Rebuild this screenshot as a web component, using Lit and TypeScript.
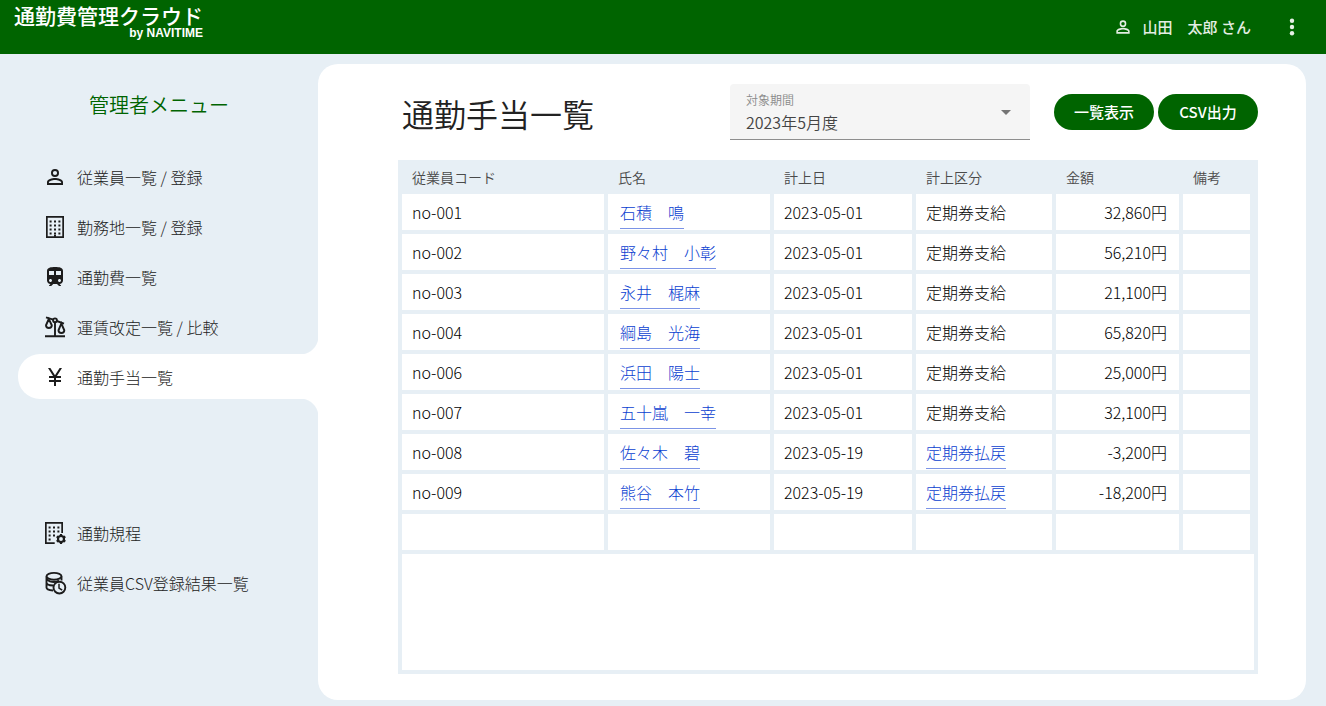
import { LitElement, html, svg, css, nothing } from "lit";
import { customElement, property } from "lit/decorators.js";
import { classMap } from "lit/directives/class-map.js";

const dots = (xs: number[], ys: number[], size: number) =>
  ys.flatMap((y) => xs.map((x) => svg`<rect x=${x} y=${y} width=${size} height=${size} />`));

const icons: Record<string, unknown> = {
  person: svg`<path d="M12 4a4 4 0 1 0 0 8 4 4 0 0 0 0-8zm0 1.9a2.1 2.1 0 1 1 0 4.2 2.1 2.1 0 0 1 0-4.2zM12 13c-2.67 0-8 1.34-8 4v3h16v-3c0-2.66-5.33-4-8-4zm6.1 5.1H5.9V17c0-.64 3.13-2.1 6.1-2.1s6.1 1.46 6.1 2.1z"/>`,
  building: svg`<path fill-rule="evenodd" d="M3 1h18v22H3zM4.7 2.7v18.6h14.600V2.700z"/>${dots([6.6, 11, 15.400], [5.500, 9.500, 13.500, 17.500], 2)}<rect x="11" y="19.800" width="2" height="2"/>`,
  train: svg`<path d="M12 2c-4 0-8 .5-8 4v9.500C4 17.430 5.570 19 7.500 19L6 20.500v.5h2.230l2-2H14l2 2h2v-.5L16.500 19c1.930 0 3.500-1.570 3.500-3.500V6c0-3.500-3.580-4-8-4zM7.500 17c-.83 0-1.500-.67-1.500-1.500S6.670 14 7.500 14s1.500.67 1.500 1.500S8.330 17 7.500 17zm3.500-7H6V6h5v4zm2 0V6h5v4h-5zm3.500 7c-.83 0-1.500-.67-1.500-1.500s.67-1.500 1.500-1.500 1.500.67 1.500 1.500-.67 1.500-1.500 1.500z"/>`,
  scale: svg`<g fill="none" stroke="currentColor" stroke-width="1.900"><path d="M2 21.300h20M12 7.500v13.500M3 2.300l7.200 2.300M13.800 6l7.200 2.600"/><circle cx="12" cy="5.300" r="1.900"/><path d="M5.800 4L3 10.300a2.900 2.700 0 0 0 5.800 0zM18.300 8.500L15.500 15.300a2.900 2.700 0 0 0 5.800 0z"/></g>`,
  yen: svg`<path d="M13.920 11H18v2h-5v2h5v2h-5v4h-2v-4H6v-2h5v-2H6v-2h4.080L5 3h2.370L12 10.290 16.630 3H19z"/>`,
  buildingGear: svg`<path d="M2 1h18v11h-1.700V2.700H3.700v18.600h8V23H2z"/>${dots([5.6, 10, 14.400], [5.500, 9.500], 2)}${dots([5.6, 10], [13.500], 2)}${dots([5.6], [17.500], 2)}<circle cx="18" cy="18" r="3" fill="none" stroke="currentColor" stroke-width="2.200"/><path fill="none" stroke="currentColor" stroke-width="2.200" d="M18 13v2M18 21v2M13.700 15.500l1.700 1M20.600 19.500l1.700 1M13.700 20.500l1.700-1M20.600 16.500l1.700-1"/>`,
  databaseClock: svg`<g fill="none" stroke="currentColor" stroke-width="1.900"><ellipse cx="11" cy="5.300" rx="7.500" ry="3.400"/><path d="M3.500 5.500v11c0 1.500 2.500 2.700 6.500 3M3.500 11.500c0 1.600 2.600 2.900 6.500 3M18.500 5.500v4M3.500 7c1.500 4.500 9 4.800 12.500 2.500"/><circle cx="16.400" cy="16.600" r="5.900"/><path stroke-width="1.500" d="M16 12.800v4.200l3.200 2.200"/></g>`,
  more: svg`<circle cx="12" cy="5.800" r="2.200"/><circle cx="12" cy="12" r="2.200"/><circle cx="12" cy="18.200" r="2.200"/>`,
};

@customElement("ui-icon")
class UiIcon extends LitElement {
  static styles = css`
    :host { display: inline-flex; flex: none; width: 24px; height: 24px; }
    .icon { width: 100%; height: 100%; fill: currentColor; }
  `;
  @property() name = "";
  render() {
    return html`<svg class="icon" viewBox="0 0 24 24" aria-hidden="true">${icons[this.name]}</svg>`;
  }
}

const mainMenu = [
  { icon: "person", label: "従業員一覧 / 登録" },
  { icon: "building", label: "勤務地一覧 / 登録" },
  { icon: "train", label: "通勤費一覧" },
  { icon: "scale", label: "運賃改定一覧 / 比較" },
  { icon: "yen", label: "通勤手当一覧", active: true },
];
const subMenu = [
  { icon: "buildingGear", label: "通勤規程" },
  { icon: "databaseClock", label: "従業員CSV登録結果一覧" },
];

@customElement("side-menu")
class SideMenu extends LitElement {
  static styles = css`
    :host { display: block; }
    .title { margin: 0; padding: 37px 0 35px; font-size: 20px; line-height: 28px; font-weight: 350; text-align: center; color: #006400; }
    .list { list-style: none; margin: 0; padding: 0 0 0 18px; display: grid; gap: 5px; }
    .list + .list { margin-top: 111px; }
    .link { position: relative; display: flex; align-items: center; gap: 10px; height: 45px; padding-left: 25px; border-radius: 22px 0 0 22px; color: #1c1c1c; text-decoration: none; font-size: 16px; line-height: 24px; font-weight: 300; }
    .label { color: #222; }
    .active { background: #fff; }
    .active::before, .active::after { content: ""; position: absolute; right: 0; width: 18px; height: 18px; }
    .active::before { bottom: 100%; background: radial-gradient(circle at 0 0, #e7eff5 18px, #fff 19px); }
    .active::after { top: 100%; background: radial-gradient(circle at 0 100%, #e7eff5 18px, #fff 19px); }
  `;
  private list(items: { icon: string; label: string; active?: boolean }[]) {
    return html`<ul class="list">
      ${items.map((item) => html`<li>
        <a class=${classMap({ link: true, active: !!item.active })} href="#" aria-current=${item.active ? "page" : nothing}>
          <ui-icon name=${item.icon}></ui-icon><span class="label">${item.label}</span>
        </a>
      </li>`)}
    </ul>`;
  }
  render() {
    return html`<nav><h2 class="title">管理者メニュー</h2>${this.list(mainMenu)}${this.list(subMenu)}</nav>`;
  }
}

interface Allowance { code: string; name: string; date: string; kind: string; amount: string; }

const rows: Allowance[] = [
  { code: "no-001", name: "石積　鳴", date: "2023-05-01", kind: "定期券支給", amount: "32,860円" },
  { code: "no-002", name: "野々村　小彰", date: "2023-05-01", kind: "定期券支給", amount: "56,210円" },
  { code: "no-003", name: "永井　梶麻", date: "2023-05-01", kind: "定期券支給", amount: "21,100円" },
  { code: "no-004", name: "綱島　光海", date: "2023-05-01", kind: "定期券支給", amount: "65,820円" },
  { code: "no-006", name: "浜田　陽士", date: "2023-05-01", kind: "定期券支給", amount: "25,000円" },
  { code: "no-007", name: "五十嵐　一幸", date: "2023-05-01", kind: "定期券支給", amount: "32,100円" },
  { code: "no-008", name: "佐々木　碧", date: "2023-05-19", kind: "定期券払戻", amount: "-3,200円" },
  { code: "no-009", name: "熊谷　本竹", date: "2023-05-19", kind: "定期券払戻", amount: "-18,200円" },
];

@customElement("allowance-table")
class AllowanceTable extends LitElement {
  static styles = css`
    :host { display: flex; flex-direction: column; padding: 0 4px 4px; background: #e7eff5; }
    .table { width: 100%; table-layout: fixed; border-collapse: separate; border-spacing: 0; }
    .col-code { width: 206px; }
    .col-name { width: 166px; }
    .col-date { width: 142px; }
    .col-kind { width: 140px; }
    .col-amount { width: 127px; }
    .col-note { width: 71px; }
    .head { height: 34px; padding: 0 10px; text-align: left; font-size: 14px; line-height: 20px; font-weight: 350; color: #4a4a4a; }
    .cell { height: 36px; padding: 0 10px; border: solid #e7eff5; border-width: 0 4px 4px 0; background: #fff; background-clip: padding-box; font-size: 16px; line-height: 24px; font-weight: 300; color: #000; }
    .name { padding-left: 12px; }
    .amount { padding-right: 12px; text-align: right; }
    .link { display: inline-block; height: 30px; box-sizing: border-box; line-height: 24px; padding-top: 1px; margin-top: 3px; vertical-align: top; border-bottom: 1px solid #7b93e6; color: #0a40d0; text-decoration: none; }
    .rest { flex: 1; background: #fff; }
  `;
  render() {
    return html`
      <table class="table">
        <colgroup><col class="col-code"><col class="col-name"><col class="col-date"><col class="col-kind"><col class="col-amount"><col class="col-note"></colgroup>
        <thead><tr>
          <th class="head" scope="col">従業員コード</th>
          <th class="head" scope="col">氏名</th>
          <th class="head" scope="col">計上日</th>
          <th class="head" scope="col">計上区分</th>
          <th class="head" scope="col">金額</th>
          <th class="head" scope="col">備考</th>
        </tr></thead>
        <tbody>
          ${rows.map((r) => html`<tr>
            <td class="cell">${r.code}</td>
            <td class="cell name"><a class="link" href="#">${r.name}</a></td>
            <td class="cell">${r.date}</td>
            <td class="cell">${r.kind === "定期券払戻" ? html`<a class="link" href="#">${r.kind}</a>` : r.kind}</td>
            <td class="cell amount">${r.amount}</td>
            <td class="cell"></td>
          </tr>`)}
          <tr>${[0, 1, 2, 3, 4, 5].map(() => html`<td class="cell"></td>`)}</tr>
        </tbody>
      </table>
      <div class="rest"></div>
    `;
  }
}

@customElement("app-root")
class AppRoot extends LitElement {
  static styles = css`
    :host { display: flex; flex-direction: column; min-height: 100vh; background: #e7eff5; color: #222; font-family: "Noto Sans CJK JP", "Noto Sans", sans-serif; font-weight: 350; }
    .header { display: flex; align-items: center; justify-content: space-between; box-sizing: border-box; height: 54px; padding: 0 22px 0 14px; background: #006400; color: #fff; }
    .logo { align-self: flex-start; display: grid; justify-items: end; padding-top: 5px; color: #fff; text-decoration: none; }
    .logo-name { font-size: 21px; line-height: 21px; font-weight: 500; }
    .logo-by { font: bold 12px/14px "Liberation Sans", Arial, sans-serif; }
    .account { display: flex; align-items: center; gap: 29px; }
    .user { display: flex; align-items: center; gap: 10px; border: 0; padding: 0; background: none; color: #e3eee3; font: 500 15px/24px "Noto Sans CJK JP", sans-serif; }
    .user-icon { width: 20px; height: 20px; }
    .more { display: flex; border: 0; padding: 0; background: none; color: #e6f0e6; }
    .body { flex: 1; display: flex; }
    .side { flex: 0 0 318px; }
    .main { flex: 1; min-width: 0; display: flex; flex-direction: column; gap: 20px; margin: 10px 20px 6px 0; padding: 20px 48px 26px 80px; border-radius: 20px; background: #fff; }
    .toolbar { display: flex; align-items: center; gap: 24px; }
    .heading { flex: 1; margin: 0; padding: 2px 0 0 4px; font-size: 32px; line-height: 48px; font-weight: 350; }
    .field { position: relative; width: 300px; }
    .field-label { position: absolute; left: 16px; top: 8px; font-size: 12px; line-height: 16px; color: #8a8a8a; }
    .select { appearance: none; display: block; width: 100%; height: 56px; box-sizing: border-box; margin: 0; padding: 20px 40px 0 16px; border: 0; border-bottom: 1px solid #8e8e8e; border-radius: 4px 4px 0 0; background: #f5f5f5; color: #444; font: 350 16px/24px "Noto Sans CJK JP", sans-serif; }
    .arrow { position: absolute; right: 19px; top: 26px; border: 5px solid transparent; border-top-color: #757575; border-bottom: 0; pointer-events: none; }
    .buttons { display: flex; gap: 4px; }
    .button { width: 100px; height: 36px; border: 0; border-radius: 18px; padding: 0; background: #006400; color: #fff; font: 500 15px/20px "Noto Sans CJK JP", sans-serif; }
    .table { flex: 1; }
  `;
  render() {
    return html`
      <header class="header">
        <a class="logo" href="#"><span class="logo-name">通勤費管理クラウド</span><span class="logo-by">by NAVITIME</span></a>
        <div class="account">
          <button class="user" type="button"><ui-icon class="user-icon" name="person"></ui-icon>山田　太郎 さん</button>
          <button class="more" type="button" aria-label="メニュー"><ui-icon name="more"></ui-icon></button>
        </div>
      </header>
      <div class="body">
        <side-menu class="side"></side-menu>
        <main class="main">
          <div class="toolbar">
            <h1 class="heading">通勤手当一覧</h1>
            <div class="field">
              <select class="select" id="period"><option>2023年5月度</option></select>
              <label class="field-label" for="period">対象期間</label>
              <span class="arrow"></span>
            </div>
            <div class="buttons">
              <button class="button" type="button">一覧表示</button>
              <button class="button" type="button">CSV出力</button>
            </div>
          </div>
          <allowance-table class="table"></allowance-table>
        </main>
      </div>
    `;
  }
}
